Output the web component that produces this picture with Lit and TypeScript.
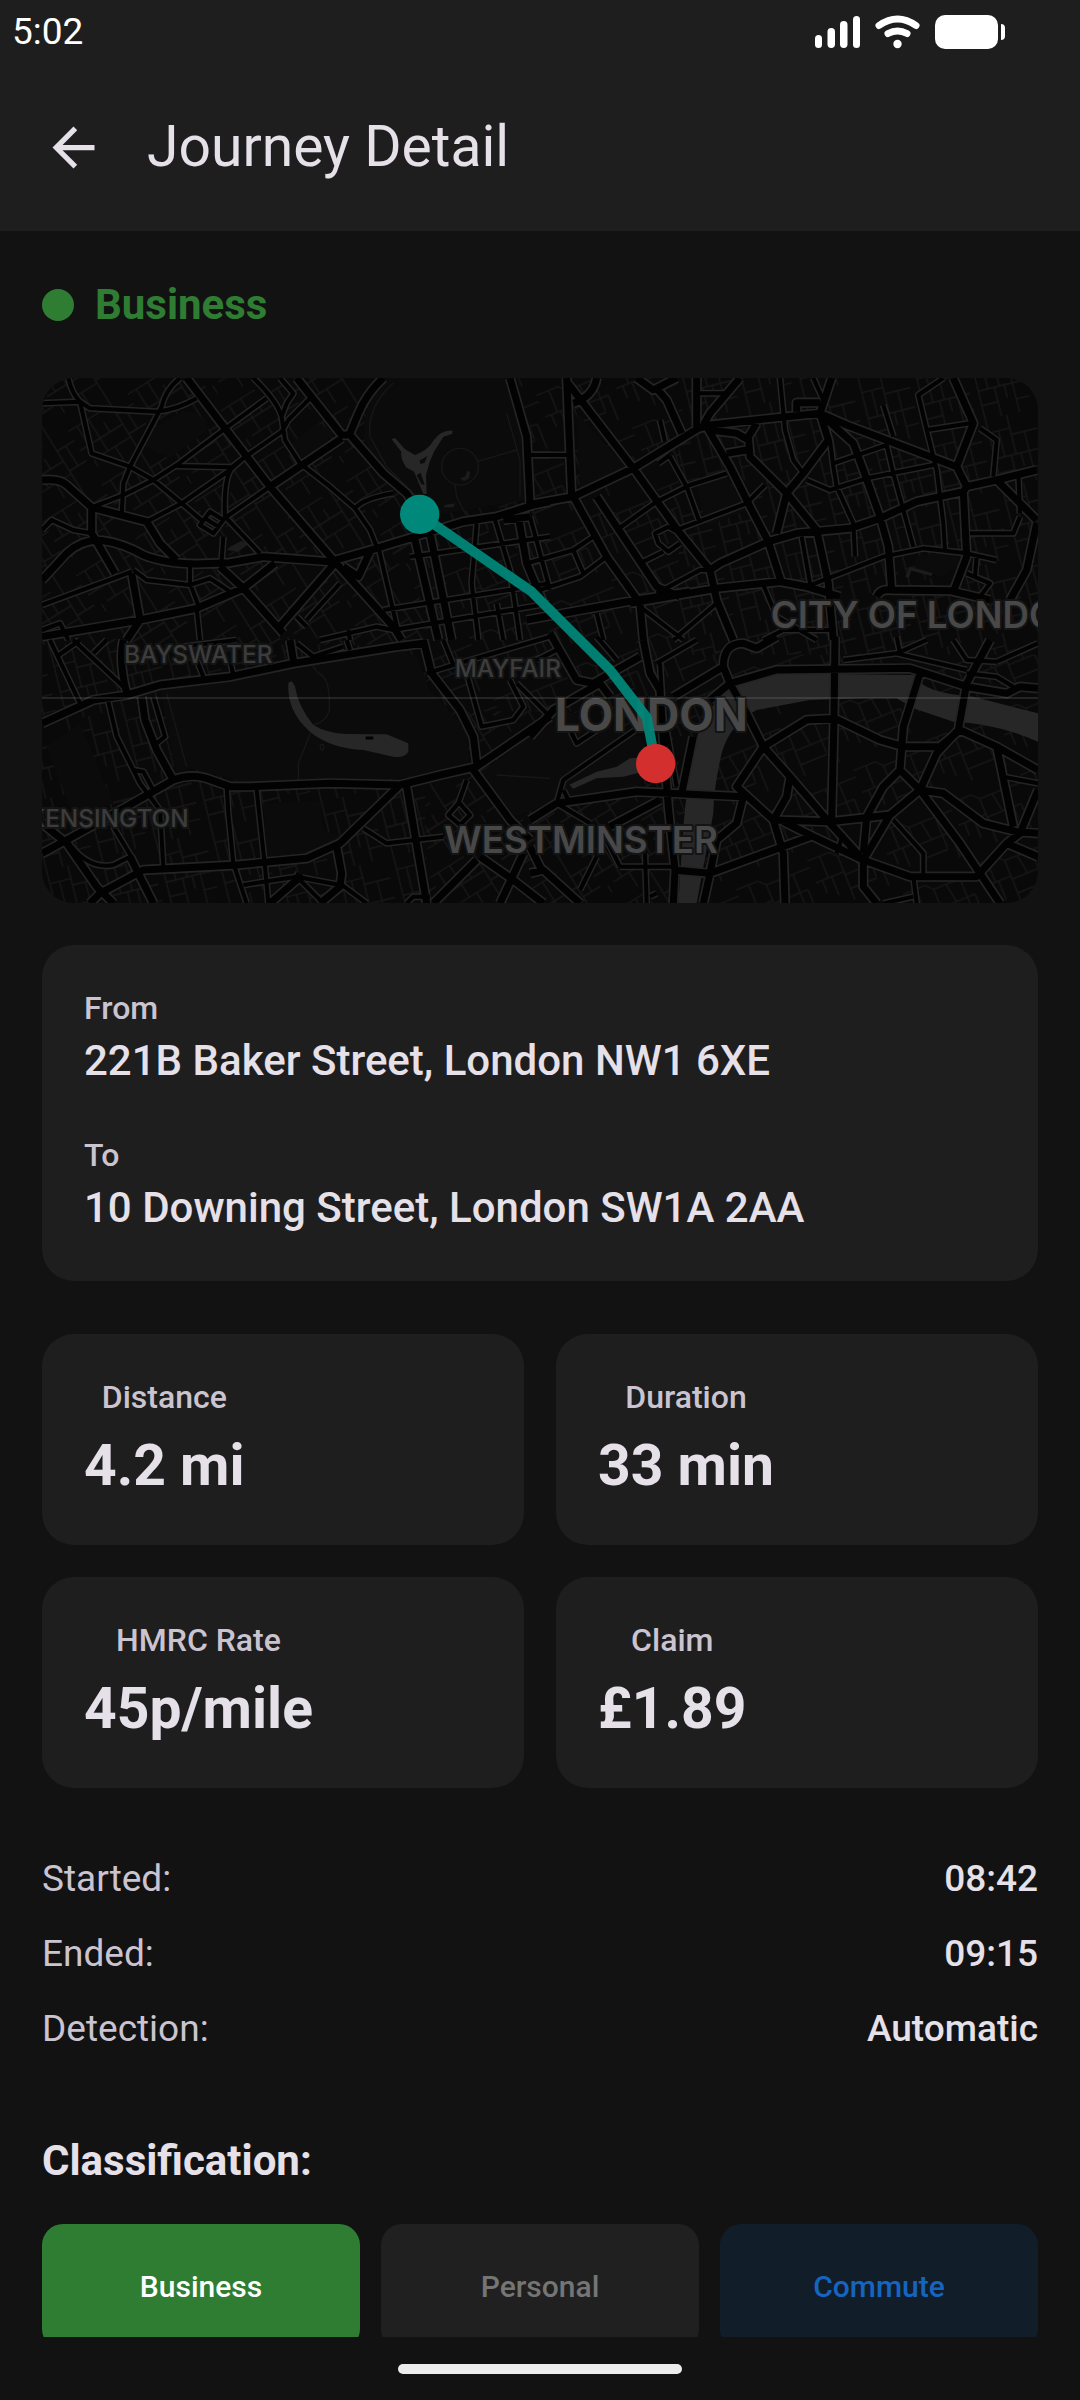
import { LitElement, html, svg, css } from "lit";
import { customElement, property, state } from "lit/decorators.js";

interface Roads {
  x: number;
  y: number;
  major: string;
  medium: string;
}

/* Street geometry, split into four map tiles with their own origin. */
const TILES: Roads[] = [
  {
    x: 0,
    y: 0,
    major:
      "M470 24L585 175L720 350L910 570L1090 770L1115 810M800 24L935 195L960 195L1060 310L1130 370L1170 430M1060 24Q1010 70 985 130L960 190M36 330Q90 325 110 345L185 412L350 455L390 520L440 570M36 630L110 550Q160 505 220 512Q280 520 340 555Q400 580 500 582L600 578L700 560L900 575L1040 535L1170 495L1300 455L1400 440L1510 405L1560 395M1440 24L1490 200L1500 400M185 412L185 490L255 610M720 350L935 205M36 800L330 750L500 715L640 655L735 580M305 610L330 750L290 810M570 590L640 655L760 790M910 585L740 780M1020 545L985 620L940 590M1155 510L1225 810M1200 490L1265 810M1465 440L1490 580L1540 700M1420 450L1500 440",
    medium:
      "M36 100L150 95L180 115L380 125Q440 120 500 85M115 24Q125 70 150 95L185 250L300 290L370 330L455 400L520 455M450 24Q405 60 395 110L300 290L280 340L275 435M185 412L280 375L370 330L440 285L580 180L710 85M440 288L605 292L640 265M350 455L455 400L600 300L640 265L755 185L775 150L840 85M670 24Q740 90 755 140L765 210L810 280L900 350L975 415L1020 480L1040 530M975 415Q1000 385 1090 370M605 295Q580 330 585 440L690 550M590 440L720 350M36 480L65 450L130 480L185 490M480 590L480 640L510 720M310 600L350 630L480 645L540 625L600 665M500 715L510 810M1045 530L1110 810M36 705L305 605M1060 720L1560 640M1090 780L1560 700M870 810L1040 770L1090 780M1220 550L1560 500M1340 460L1325 640L1345 810M1395 450L1440 600L1470 810M1500 255H1560M750 24L790 70L770 100L755 140M510 465L540 425L580 450L550 490ZM525 445L565 470M580 500L575 570M960 810L955 780M830 750L930 640M1140 560L1220 550M1400 700L1420 810M36 780L90 760L115 810M800 740L830 770",
  },
  {
    x: 1500,
    y: 0,
    major:
      "M110 24L125 380M-10 405L130 380L310 295L505 175L540 165L770 140L870 130L950 165L1280 290L1310 350M110 35L310 295L450 490L540 600L560 690L610 810M130 380L230 560L330 700L340 810M200 380L380 650L450 680M500 24L500 175M630 24L540 130L520 165M530 170L600 290L660 410L715 515L755 640M375 50L410 90L455 190M320 24L370 60L440 24M540 600L570 580L715 515L800 490L960 475L1050 445L1160 395L1300 365L1310 350L1400 330L1520 300M300 700L560 655L750 635L830 650L930 680M-10 750L320 690L480 665M905 24L870 130L895 210L820 310L770 370L740 490M680 160L655 200L660 260L770 370L860 480L895 640L910 810M870 130L970 220L1000 300L1050 440L1075 530L1085 660M1270 24L1330 160L1280 290M1300 365L1310 560L1270 665M1040 680Q1050 655 1085 660L1260 662L1380 690M1400 330L1470 400L1520 450M1520 460L1490 600L1440 690M540 180L620 190L655 210M590 250L650 240M800 125V98H870M200 24Q190 80 130 100",
    medium:
      "M750 24L765 180L790 270L820 310M850 24L880 90M1240 24L1165 75L1190 180L1220 300L1240 460L1245 540M1190 180L1320 160M1350 175L1400 210L1390 320M900 210L910 290L920 350L970 460L975 560M830 330L900 360L1010 325L1210 285M910 280L1070 225L1090 310L1150 530M420 260L470 350L510 460M440 480L650 400L705 345M10 255H115M260 480L380 395L480 345L590 310M-10 580L130 540L190 500M0 440L60 660M130 540L160 610M0 670L150 620L230 560M815 500L840 640M330 580L400 545M450 490L415 470L375 490L385 520L415 545L450 520M830 650L1060 560L1180 535L1310 550L1400 570M1320 490H1450L1470 440M1310 610L1380 640L1350 680M1465 310L1470 430M380 670L510 600L540 600M700 645L740 740L860 810M385 280L420 255M510 70H590M1340 560L1335 620M430 810L560 700M200 730L220 810M330 710L460 810M390 150L405 215M1060 105L1090 200M700 810L760 780H900",
  },
  {
    x: 0,
    y: 810,
    major:
      "M36 250L190 180L290 165L390 135L600 110L790 70L1100 20L1180 10M280 0Q265 60 290 160M780 0L790 60M1180 0L1205 100L1290 210L1330 290L1340 370M335 170L345 240L380 330L430 420M36 640L110 600L290 500L430 420Q480 400 530 415L600 440L660 440L900 430L1110 435L1230 405L1340 380L1560 230M1110 435L930 610L830 655L620 675L340 690L210 760L180 790M36 550L110 610L200 740L250 790M1130 440L1190 790M1330 390L1440 540L1500 600M1340 660L1210 790M1350 650L1450 720L1540 790M1480 640L1410 790M300 650L370 790M920 620L935 700L930 740L870 790M810 700L800 720L720 790",
    medium:
      "M60 0L150 190M80 50L150 0M130 0L280 140M235 185L260 290L330 430L390 510L400 680M310 390L340 395L375 460M370 170L405 290L380 310M590 440L595 520L610 670L650 790M680 450L705 680L715 790M250 560L310 660M110 600Q170 690 250 675L300 650M1310 100L1355 260L1450 240L1480 200L1460 160L1440 120M1190 100L1270 75L1560 -10M1310 420L1285 490L1255 525L1290 555L1320 525L1285 485M1000 565L1070 610L1240 590M930 730L1010 790M640 735L800 710L930 735M810 720L880 790M1130 790L1150 770L1200 770M500 60L520 110M600 60L610 105M950 0L960 30M1460 130L1560 230M1240 0L1270 75M460 20L620 0M800 10L850 50L940 20M190 40L230 0",
  },
  {
    x: 1500,
    y: 810,
    major:
      "M60 -20L140 120L190 130L330 50M0 290L70 210L210 130L240 170M340 0L360 100L390 150L400 300L415 500L435 690L430 790M580 80Q580 10 640 10L680 25L740 -10M430 170L580 80L600 130L650 220L700 320M540 180L600 130L740 90L1140 85L1310 140L1430 160L1470 140L1524 145M915 -10L912 240L905 540M1170 100L1120 260L1110 390L1170 450M1380 0L1310 130L1285 270L1220 340L1170 450L1290 610L1350 700L1410 790M700 320L830 240L915 235L1050 300L1120 320L1230 320L1290 270L1400 320L1524 390M700 320L620 440L730 540L760 640L765 790M700 320L780 410L900 550L1000 660L1000 740L1040 790M80 490L320 455L640 470M490 290L455 460M780 410L770 470L730 540L900 545L1080 525L1170 450L1240 460L1360 550L1460 575L1524 580M1080 525L1000 660M1110 390L1060 440L1010 530L1000 640M760 545L850 590L1000 660L1140 710L1340 710L1430 610L1524 650M540 700L840 590M430 690L540 700L520 790M640 470L620 550L560 600L540 700M1430 610L1470 580L1524 450M1400 320L1450 560M0 540L80 490M0 700L40 690L150 790M0 620L40 700M240 560L390 480",
    medium:
      "M80 490L100 420L330 260M80 490L180 550M100 450L115 480M270 680H430M345 640L350 790M230 600L270 680M150 750L200 650M1090 540L1180 640V700M1150 710L1160 790M1420 410L1524 430M380 70L500 0M940 60L1100 40L1190 0M1100 40L1310 90M1400 65L1524 10M1310 100L1400 110L1450 140M1270 0L1310 60L1400 65M200 -10L260 60M390 70L395 150M20 60L80 30M120 270L140 310L200 270M920 640L940 580M410 270L440 440M1060 790L1150 770M1100 -10L1110 40M360 770L380 760",
  },
];

@customElement("route-map")
export class RouteMap extends LitElement {
  static styles = css`
    :host {
      display: block;
      height: 525px;
      border-radius: 32px;
      overflow: hidden;
      background: #090909;
    }
    .map {
      display: block;
      width: 100%;
      height: 100%;
    }
    .road {
      fill: none;
      stroke-linejoin: round;
    }
    .casing {
      stroke: #242424;
    }
    .core {
      stroke: #020202;
    }
    .street {
      fill: none;
      stroke: #171717;
      stroke-width: 4;
    }
    .park {
      fill: #0b0b0b;
    }
    .path {
      fill: none;
      stroke: #171717;
      stroke-width: 4;
    }
    .water {
      fill: #272727;
    }
    .pond {
      fill: #1c1c1c;
    }
    .place {
      font-family: Inter, "Open Sans", sans-serif;
      fill: #484848;
      stroke: #141414;
      stroke-width: 12;
      stroke-linejoin: round;
      paint-order: stroke;
      font-weight: 600;
    }
    .district {
      font-size: 73px;
      font-weight: 500;
      fill: #3c3c3c;
    }
    .area {
      font-size: 110px;
    }
    .city {
      font-size: 134px;
      font-weight: 700;
    }
  `;

  private roads(kind: "major" | "medium", layer: "casing" | "core", width: number) {
    return TILES.map(
      (t) => svg`<path class="road ${layer}" transform="translate(${t.x} ${t.y})" stroke-width=${width} d=${t[kind]}></path>`,
    );
  }

  render() {
    return html`
      <svg class="map" viewBox="36 24 2988 1575" preserveAspectRatio="xMidYMid slice" role="img" aria-label="Route map">
        <defs>
          <pattern id="grid-a" width="210" height="190" patternUnits="userSpaceOnUse" patternTransform="rotate(-32)">
            <path class="street" d="M0 28H120M30 28V95M70 28V140M0 95H150M105 60V95M150 0V190M150 60H210M180 60V130M150 130H210M40 140H150M95 140V190M20 140V165"></path>
          </pattern>
          <pattern id="grid-b" width="170" height="210" patternUnits="userSpaceOnUse" patternTransform="rotate(-14)">
            <path class="street" d="M25 0V210M25 40H90M90 0V120M55 40V120M25 120H170M130 60V210M90 60H170M75 120V210M25 165H75M130 170H170M105 120V160"></path>
          </pattern>
          <pattern id="grid-c" width="230" height="200" patternUnits="userSpaceOnUse" patternTransform="rotate(-22)">
            <path class="street" d="M0 40H70L90 60H230M40 40V110M90 60V200M130 60L140 120M0 110H90M90 120H200M175 60V160M200 120V200M90 165H175M50 110V170M20 110V150"></path>
          </pattern>
        </defs>
        <rect x="36" y="24" width="1150" height="800" fill="url(#grid-a)"></rect>
        <rect x="1186" y="24" width="760" height="1000" fill="url(#grid-c)"></rect>
        <rect x="1946" y="24" width="1080" height="830" fill="url(#grid-b)"></rect>
        <rect x="36" y="824" width="1150" height="780" fill="url(#grid-b)"></rect>
        <rect x="1186" y="1024" width="760" height="580" fill="url(#grid-a)"></rect>
        <rect x="1946" y="854" width="1080" height="750" fill="url(#grid-c)"></rect>

        <path class="park" d="M1070 24Q1000 90 1000 200L1040 290L1190 440L1490 390L1475 180L1430 24Z"></path>
        <path class="park" d="M350 190L450 125Q500 110 540 175L420 265L340 230ZM770 230L860 160L920 190L820 270ZM1640 130L1790 290L1650 360Z"></path>
        <path class="park" d="M390 960L800 885L1110 840L1160 860L1200 960L1310 1080L1320 1180L1110 1225L650 1240L480 1195L440 1210Z"></path>
        <path class="park" d="M50 1130L150 1060L250 1300L130 1340ZM700 1300L870 1290L880 1380L940 1400L830 1460L710 1465Z"></path>
        <path class="park" d="M1350 1210L1600 1020L1830 1100L1880 1190L1800 1270L1590 1290L1450 1340Z"></path>
        <path class="park" d="M2000 350L2090 320L2150 420L2030 470ZM2650 560L2760 545L2800 580L2740 620L2660 600Z"></path>
        <path class="path" d="M1020 200Q1010 110 1090 40M1020 200L1070 290L1180 400M1430 130L1470 270V380M1340 275L1460 240M1275 345L1280 380L1310 440M1235 290a55 55 0 1 0 110 0a55 55 0 1 0 -110 0M848 880Q850 900 880 920Q900 940 898 1020Q890 1055 850 1065Q830 1120 805 1180V1230M870 1125q10 -8 12 8q-8 20 -12 -8M410 970L470 1190M1400 1215L1560 1225"></path>
        <path class="water" d="M1085 208L1095 204L1125 238L1155 255Q1195 240 1210 212Q1235 178 1268 182L1266 192L1240 200L1212 245Q1195 280 1188 315L1190 372L1180 372L1152 305L1128 292Q1110 262 1114 245Z"></path>
        <path class="park" d="M1168 272L1192 258L1184 278L1172 282ZM1160 316L1172 308L1184 345L1174 342Z"></path>
        <path class="pond" d="M1290 325L1305 320L1312 302L1320 305L1318 325L1302 334ZM600 530L635 512L655 522L625 545L590 540ZM1245 405L1275 400L1270 412L1240 412ZM2640 590L2708 610L2704 618L2636 600ZM2626 620L2636 596L2644 600L2636 624Z"></path>
        <path class="water" d="M775 940Q785 925 795 950Q805 1010 850 1065Q890 1090 950 1092L1070 1093L1135 1120V1145Q1125 1164 1090 1160L1000 1140Q900 1135 840 1085Q770 1025 775 940Z"></path>
        <path class="core" d="M1007 1104H1030" stroke-width="9"></path>
        <path class="water" d="M1618 1244L1700 1205L1760 1190L1800 1165L1850 1160L1860 1200L1780 1220L1700 1225L1630 1256Z"></path>
        <path class="water" d="M2110 945Q2180 910 2240 910L2650 915Q2680 970 2830 980L3024 1030V1115Q2900 1060 2770 1055L2650 1015L2600 985H2500L2340 990L2180 1020Q2100 1060 2075 1150Q2050 1260 2050 1330L2020 1490L2000 1600H1945L1960 1370Q1975 1190 2010 1070L2060 990Z"></path>

        ${this.roads("medium", "casing", 21)} ${this.roads("major", "casing", 31)}
        ${this.roads("medium", "core", 12)} ${this.roads("major", "core", 21)}

        <text class="place district" x="282" y="878">BAYSWATER</text>
        <text class="place district" x="1274" y="921">MAYFAIR</text>
        <text class="place district" x="476" y="1371" text-anchor="end">KENSINGTON</text>
        <text class="place area" x="2222" y="773">CITY OF LONDON</text>
        <text class="place area" x="1243" y="1448">WESTMINSTER</text>
        <text class="place city" x="1574" y="1084">LONDON</text>
        <path d="M36 984H3024" stroke="#ffffff" stroke-opacity="0.14" stroke-width="5"></path>

        <path d="M1169 433L1505 665L1740 900L1850 1042L1877 1181" fill="none" stroke="#00897b" stroke-opacity="0.92" stroke-width="30" stroke-linejoin="round"></path>
        <circle cx="1169" cy="433" r="59" fill="#00897b"></circle>
        <circle cx="1877" cy="1181" r="59" fill="#d32f2f"></circle>
      </svg>
    `;
  }
}

@customElement("stat-card")
export class StatCard extends LitElement {
  static styles = css`
    :host {
      display: block;
      padding: 42px;
      border-radius: 32px;
      background: #1e1e1e;
    }
    .stack {
      display: inline-flex;
      flex-direction: column;
      align-items: center;
      gap: 11px;
      vertical-align: top;
    }
    .label {
      font-size: 32px;
      line-height: 42px;
      font-weight: 500;
      color: #cac4d0;
    }
    .value {
      font-size: 57px;
      line-height: 74px;
      font-weight: 700;
      color: #e6e0e9;
    }
  `;

  @property() label = "";
  @property() value = "";

  render() {
    return html`<div class="stack">
      <span class="label">${this.label}</span>
      <span class="value">${this.value}</span>
    </div>`;
  }
}

@customElement("app-root")
export class AppRoot extends LitElement {
  static styles = css`
    :host {
      display: flex;
      flex-direction: column;
      height: 100vh;
      background: #121212;
      color: #e6e0e9;
      font-family: Roboto, "Noto Sans", sans-serif;
    }
    .top {
      flex: none;
      background: #1e1e1e;
    }
    .status {
      display: flex;
      align-items: center;
      justify-content: space-between;
      height: 63px;
      padding: 0 74px 0 12px;
      box-sizing: border-box;
      color: #ffffff;
    }
    .clock {
      font-size: 37px;
      line-height: 63px;
    }
    .signals {
      display: block;
      width: 192px;
      height: 36px;
      fill: #ffffff;
    }
    .bar {
      display: flex;
      align-items: center;
      gap: 42px;
      height: 168px;
      padding: 0 42px;
    }
    .back {
      display: flex;
      padding: 0;
      border: 0;
      background: none;
      color: inherit;
    }
    .arrow {
      display: block;
      width: 63px;
      height: 63px;
      fill: currentColor;
    }
    .title {
      margin: 0;
      font-size: 57px;
      line-height: 74px;
      font-weight: 400;
    }
    .content {
      flex: 1;
      min-height: 0;
      overflow-y: auto;
      scrollbar-width: none;
      padding: 42px 42px 0;
    }
    .kind {
      display: flex;
      align-items: center;
      gap: 21px;
      margin-bottom: 42px;
      font-size: 42px;
      line-height: 63px;
      font-weight: 700;
      color: #2e7d32;
    }
    .dot {
      width: 32px;
      height: 32px;
      border-radius: 50%;
      background: #2e7d32;
    }
    .places {
      display: flex;
      flex-direction: column;
      gap: 42px;
      margin: 42px 0 53px;
      padding: 42px;
      border-radius: 32px;
      background: #1e1e1e;
    }
    .label {
      font-size: 32px;
      line-height: 42px;
      font-weight: 500;
      color: #cac4d0;
    }
    .address {
      margin: 0;
      font-size: 42px;
      line-height: 63px;
      font-weight: 500;
    }
    .stats {
      display: grid;
      grid-template-columns: 1fr 1fr;
      gap: 32px;
    }
    .details {
      display: flex;
      flex-direction: column;
      gap: 22px;
      margin: 64px 0 74px;
      font-size: 37px;
      line-height: 53px;
    }
    .detail {
      display: flex;
      justify-content: space-between;
    }
    .term {
      color: #cac4d0;
    }
    .data {
      margin: 0;
      font-weight: 500;
    }
    .heading {
      margin: 0 0 32px;
      font-size: 42px;
      line-height: 63px;
      font-weight: 700;
    }
    .choices {
      display: grid;
      grid-template-columns: repeat(3, 1fr);
      gap: 21px;
    }
    .choice {
      height: 126px;
      padding: 0;
      border: 0;
      border-radius: 21px;
      font-family: inherit;
      font-size: 30px;
      line-height: 42px;
      font-weight: 500;
    }
    .business {
      background: #14211a;
      color: #2e7d32;
    }
    .personal {
      background: #202020;
      color: #757575;
    }
    .commute {
      background: #121d2a;
      color: #1565c0;
    }
    .choice.business[aria-pressed="true"] {
      background: #2e7d32;
      color: #ffffff;
    }
    .choice.personal[aria-pressed="true"] {
      background: #757575;
      color: #ffffff;
    }
    .choice.commute[aria-pressed="true"] {
      background: #1565c0;
      color: #ffffff;
    }
    .nav {
      flex: none;
      display: flex;
      align-items: center;
      justify-content: center;
      height: 63px;
    }
    .pill {
      width: 284px;
      height: 10px;
      border-radius: 5px;
      background: #ececec;
    }
  `;

  @state() private selected = "Business";

  private places = [
    ["From", "221B Baker Street, London NW1 6XE"],
    ["To", "10 Downing Street, London SW1A 2AA"],
  ];
  private stats = [
    ["Distance", "4.2 mi"],
    ["Duration", "33 min"],
    ["HMRC Rate", "45p/mile"],
    ["Claim", "£1.89"],
  ];
  private details = [
    ["Started:", "08:42"],
    ["Ended:", "09:15"],
    ["Detection:", "Automatic"],
  ];
  private choices = ["Business", "Personal", "Commute"];

  render() {
    return html`
      <header class="top">
        <div class="status">
          <span class="clock">5:02</span>
          <svg class="signals" viewBox="814 13 192 36" aria-hidden="true">
            <rect x="815" y="34" width="7" height="13" rx="3.5"></rect>
            <rect x="827.5" y="27" width="7.5" height="20" rx="3.7"></rect>
            <rect x="840" y="20" width="7.5" height="27" rx="3.7"></rect>
            <rect x="853" y="15" width="7" height="32" rx="3.5"></rect>
            <path d="M879 24.5Q897.5 11.500 916 24.5" fill="none" stroke="#fff" stroke-width="7" stroke-linecap="round"></path>
            <path d="M888 32.5Q897.5 27.5 907 32.5" fill="none" stroke="#fff" stroke-width="7" stroke-linecap="round"></path>
            <circle cx="897.5" cy="43" r="4.2"></circle>
            <rect x="935" y="14" width="63" height="34" rx="10"></rect>
            <path d="M1001 23q4 0 4 4v8q0 4-4 4z"></path>
          </svg>
        </div>
        <div class="bar">
          <button class="back" aria-label="Back">
            <svg class="arrow" viewBox="0 0 24 24" aria-hidden="true">
              <path d="M20 11H7.83l5.59-5.59L12 4l-8 8 8 8 1.41-1.41L7.83 13H20z"></path>
            </svg>
          </button>
          <h1 class="title">Journey Detail</h1>
        </div>
      </header>
      <main class="content">
        <div class="kind"><span class="dot"></span>${this.selected}</div>
        <route-map></route-map>
        <dl class="places">
          ${this.places.map(
            ([label, address]) => html`<div>
              <dt class="label">${label}</dt>
              <dd class="address">${address}</dd>
            </div>`,
          )}
        </dl>
        <section class="stats">
          ${this.stats.map(([label, value]) => html`<stat-card .label=${label} .value=${value}></stat-card>`)}
        </section>
        <dl class="details">
          ${this.details.map(
            ([term, data]) => html`<div class="detail">
              <dt class="term">${term}</dt>
              <dd class="data">${data}</dd>
            </div>`,
          )}
        </dl>
        <h2 class="heading">Classification:</h2>
        <div class="choices">
          ${this.choices.map(
            (name) => html`<button
              class="choice ${name.toLowerCase()}"
              aria-pressed=${this.selected === name ? "true" : "false"}
              @click=${() => (this.selected = name)}
            >
              ${name}
            </button>`,
          )}
        </div>
      </main>
      <footer class="nav"><div class="pill"></div></footer>
    `;
  }
}
